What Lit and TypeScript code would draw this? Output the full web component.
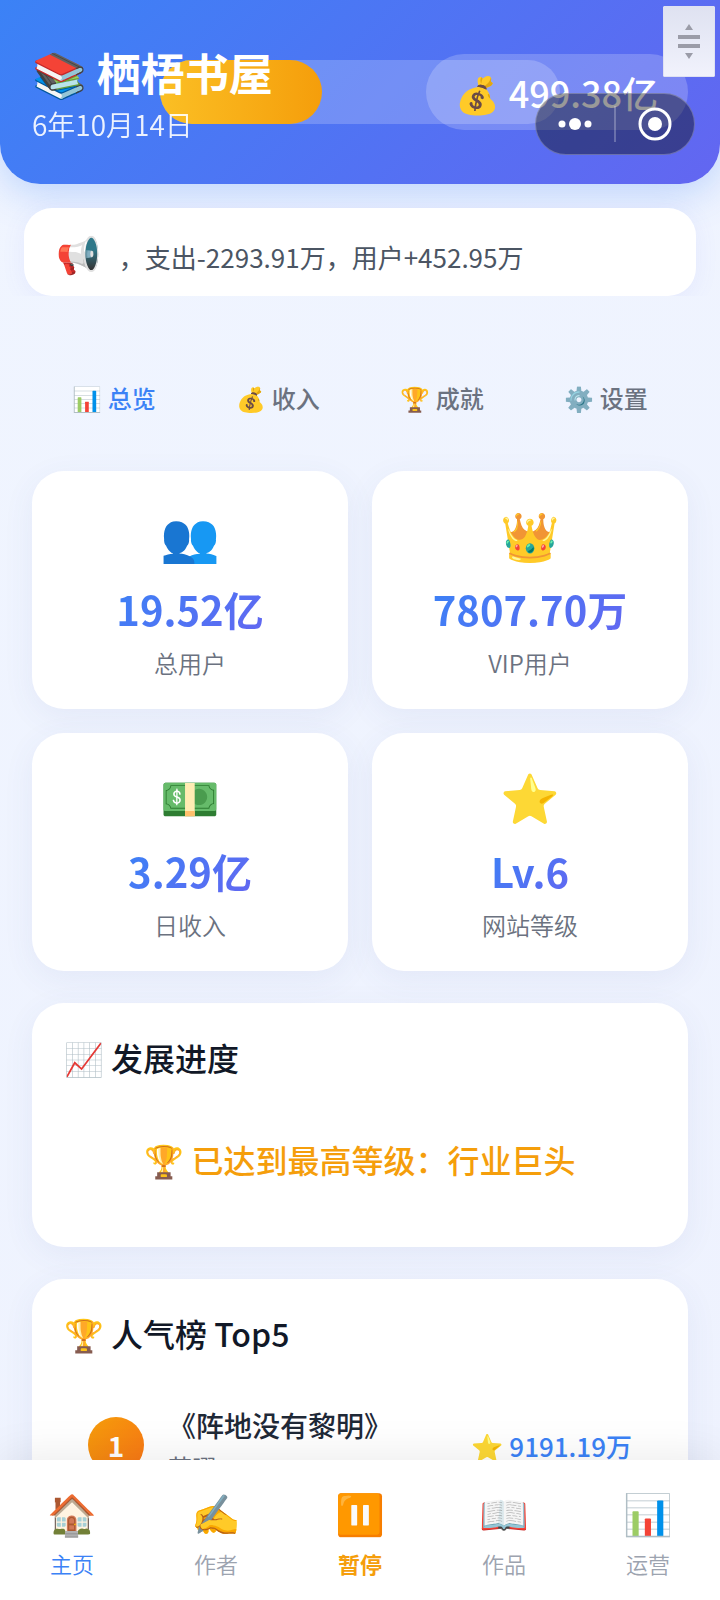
import { LitElement, html, css, svg } from "lit";
import { customElement, state } from "lit/decorators.js";
import { classMap } from "lit/directives/class-map.js";

interface Stat {
  icon: string;
  value: string;
  label: string;
}

const TABS = [
  { icon: "📊", label: "总览" },
  { icon: "💰", label: "收入" },
  { icon: "🏆", label: "成就" },
  { icon: "⚙️", label: "设置" },
];

const STATS: Stat[] = [
  { icon: "👥", value: "19.52亿", label: "总用户" },
  { icon: "👑", value: "7807.70万", label: "VIP用户" },
  { icon: "💵", value: "3.29亿", label: "日收入" },
  { icon: "⭐", value: "Lv.6", label: "网站等级" },
];

const BOOKS = [{ title: "《阵地没有黎明》", author: "苏曜", score: "9191.19万" }];

const NAV = [
  { icon: "🏠", label: "主页", kind: "active" },
  { icon: "✍️", label: "作者", kind: "" },
  { icon: "⏸️", label: "暂停", kind: "pause" },
  { icon: "📖", label: "作品", kind: "" },
  { icon: "📊", label: "运营", kind: "" },
];

@customElement("app-root")
export class AppRoot extends LitElement {
  @state() private tab = 0;
  @state() private progress = 40.5;

  static styles = css`
    :host {
      display: flex;
      flex-direction: column;
      height: 100vh;
      position: relative;
      overflow: hidden;
      font-family: "Noto Sans CJK SC", "Noto Color Emoji", sans-serif;
      color: #111827;
      background: linear-gradient(135deg, #f0f5ff 0%, #eef2fe 100%);
    }
    * {
      box-sizing: border-box;
    }
    h1,
    h2,
    p,
    ol {
      margin: 0;
      padding: 0;
    }
    button {
      font-family: inherit;
      border: 0;
      padding: 0;
      background: none;
      cursor: pointer;
    }
    .header {
      position: relative;
      flex: none;
      display: flex;
      justify-content: space-between;
      align-items: flex-start;
      padding: 44px 32px 40px;
      border-radius: 0 0 40px 40px;
      color: #fff;
      background: linear-gradient(135deg, #3b82f6, #6366f1);
      box-shadow: 0 8px 40px rgba(59, 130, 246, 0.3);
    }
    .brand {
      position: relative;
    }
    .name {
      font-size: 44px;
      line-height: 56px;
      font-weight: 700;
    }
    .date {
      margin-top: 4px;
      font-size: 28px;
      line-height: 40px;
      font-weight: 350;
      opacity: 0.9;
    }
    .speed {
      position: absolute;
      left: 160px;
      right: 160px;
      top: 60px;
      height: 64px;
      border-radius: 32px;
      background: rgba(255, 255, 255, 0.2);
    }
    .speed-fill {
      height: 100%;
      border-radius: 32px;
      background: linear-gradient(90deg, #fbbf24, #f59e0b);
    }
    .money {
      position: relative;
      display: flex;
      align-items: center;
      gap: 8px;
      margin-top: 10px;
      height: 76px;
      padding: 0 30px;
      border-radius: 38px;
      font-size: 36px;
      font-weight: 500;
      background: rgba(255, 255, 255, 0.2);
    }
    .capsule {
      position: absolute;
      z-index: 3;
      top: 93px;
      right: 25px;
      display: flex;
      align-items: center;
      width: 160px;
      height: 62px;
      border-radius: 31px;
      border: 1px solid rgba(255, 255, 255, 0.25);
      background: rgba(0, 0, 0, 0.4);
    }
    .capsule button {
      flex: 1;
      display: grid;
      place-items: center;
    }
    .capsule button + button {
      border-left: 2px solid rgba(255, 255, 255, 0.25);
      height: 36px;
    }
    .handle {
      position: absolute;
      z-index: 4;
      top: 6px;
      right: 5px;
      width: 52px;
      height: 71px;
      display: grid;
      place-items: center;
      border: 1px solid #dfe1f2;
      border-radius: 1px;
      background: linear-gradient(#dfe2f1, #f1f2fc);
    }
    svg {
      display: block;
    }
    .scroll {
      position: relative;
      flex: 1;
      min-height: 0;
      overflow-y: auto;
      scrollbar-width: none;
    }
    .notice-wrap {
      overflow: hidden;
      padding: 24px 24px 0;
    }
    .notice {
      display: flex;
      align-items: center;
      gap: 18px;
      height: 88px;
      padding: 0 32px;
      border-radius: 28px;
      background: #fff;
      box-shadow: 0 4px 24px rgba(99, 102, 241, 0.08);
    }
    .notice-icon {
      font-size: 36px;
    }
    .notice-text {
      padding-top: 8px;
      font-size: 26px;
      color: #4b5563;
      white-space: nowrap;
    }
    .tabs {
      display: grid;
      grid-template-columns: repeat(4, 1fr);
      margin: 62px 32px 34px;
    }
    .tab {
      height: 79px;
      font-size: 24px;
      font-weight: 500;
      color: #6b7280;
    }
    .tab.on {
      color: #3b82f6;
    }
    .stats {
      display: grid;
      grid-template-columns: 1fr 1fr;
      gap: 24px;
      padding: 0 32px;
    }
    .stat {
      display: flex;
      flex-direction: column;
      align-items: center;
      padding: 26px 24px 28px;
      border-radius: 32px;
      background: #fff;
      box-shadow: 0 8px 32px rgba(70, 80, 160, 0.07);
    }
    .stat-icon {
      font-size: 48px;
      line-height: 72px;
    }
    .stat-value {
      font-size: 40px;
      line-height: 60px;
      margin-top: 10px;
      font-weight: 700;
      color: transparent;
      background: linear-gradient(135deg, #3b82f6, #6366f1);
      background-clip: text;
      -webkit-background-clip: text;
    }
    .stat-label {
      font-size: 24px;
      line-height: 36px;
      margin-top: 6px;
      font-weight: 350;
      color: #6b7280;
    }
    .card {
      margin: 32px 32px 0;
      padding: 32px;
      border-radius: 32px;
      background: #fff;
      box-shadow: 0 8px 32px rgba(70, 80, 160, 0.07);
    }
    .card-title {
      font-size: 32px;
      line-height: 44px;
      font-weight: 500;
    }
    .top-level {
      padding: 52px 0 28px;
      font-size: 32px;
      line-height: 56px;
      font-weight: 500;
      text-align: center;
      color: #f59e0b;
    }
    .ranks {
      list-style: none;
      margin-top: 34px;
    }
    .rank {
      display: flex;
      align-items: center;
      gap: 24px;
      padding: 16px 24px;
    }
    .badge {
      flex: none;
      display: grid;
      place-items: center;
      width: 56px;
      height: 56px;
      border-radius: 50%;
      font-size: 28px;
      font-weight: 700;
      color: #fff;
      background: linear-gradient(135deg, #f59e0b, #f97316);
    }
    .book {
      flex: 1;
    }
    .book-title {
      font-size: 28px;
      line-height: 40px;
      font-weight: 500;
      color: #1f2937;
    }
    .book-author {
      margin-top: 4px;
      font-size: 24px;
      line-height: 36px;
      color: #6b7280;
    }
    .score {
      font-size: 26px;
      font-weight: 500;
      color: #3b82f6;
    }
    .nav {
      position: relative;
      flex: none;
      display: grid;
      grid-template-columns: repeat(5, 1fr);
      padding: 22px 0 20px;
      background: #fff;
      box-shadow: 0 -4px 40px rgba(0, 0, 0, 0.08);
    }
    .nav-item {
      display: flex;
      flex-direction: column;
      align-items: center;
      gap: 4px;
      font-weight: 350;
      color: #9ca3af;
    }
    .nav-icon {
      font-size: 40px;
      line-height: 60px;
    }
    .nav-label {
      font-size: 22px;
      line-height: 34px;
    }
    .nav-item.active {
      color: #3b82f6;
    }
    .nav-item.pause {
      color: #f59e0b;
      font-weight: 700;
    }
  `;

  private dots = svg`<circle cx="4" cy="8" r="3.5"/><circle cx="17" cy="8" r="6"/><circle cx="30" cy="8" r="3.5"/>`;

  render() {
    return html`
      <header class="header">
        <div class="speed">
          <div class="speed-fill" style="width:${this.progress}%"></div>
        </div>
        <div class="brand">
          <h1 class="name">📚 栖梧书屋</h1>
          <p class="date">6年10月14日</p>
        </div>
        <div class="money"><span>💰</span><span>499.38亿</span></div>
      </header>
      <div class="capsule">
        <button aria-label="更多">
          <svg width="34" height="16" viewBox="0 0 34 16" fill="#fff">${this.dots}</svg>
        </button>
        <button aria-label="关闭">
          <svg width="34" height="34" viewBox="0 0 34 34">
            <circle cx="17" cy="17" r="15" fill="none" stroke="#fff" stroke-width="3" />
            <circle cx="17" cy="17" r="7" fill="#fff" />
          </svg>
        </button>
      </div>
      <button class="handle" aria-label="拖动">
        <svg width="22" height="36" viewBox="0 0 22 36" fill="#9b9ca8">
          <path d="M7 6 11 0 15 6ZM0 11h22v4H0ZM0 20h22v4H0ZM7 29h8l-4 6Z" />
        </svg>
      </button>

      <main class="scroll">
        <div class="notice-wrap">
          <div class="notice">
            <span class="notice-icon">📢</span>
            <span class="notice-text">，支出-2293.91万，用户+452.95万</span>
          </div>
        </div>

        <div class="tabs">
          ${TABS.map(
            (t, i) => html`<button
              class=${classMap({ tab: true, on: i === this.tab })}
              @click=${() => (this.tab = i)}
            >${t.icon} ${t.label}</button>`
          )}
        </div>

        <section class="stats">
          ${STATS.map(
            (s) => html`<div class="stat">
              <span class="stat-icon">${s.icon}</span>
              <span class="stat-value">${s.value}</span>
              <span class="stat-label">${s.label}</span>
            </div>`
          )}
        </section>

        <section class="card">
          <h2 class="card-title">📈 发展进度</h2>
          <p class="top-level">🏆 已达到最高等级：行业巨头</p>
        </section>

        <section class="card">
          <h2 class="card-title">🏆 人气榜 Top5</h2>
          <ol class="ranks">
            ${BOOKS.map(
              (b, i) => html`<li class="rank">
                <span class="badge">${i + 1}</span>
                <div class="book">
                  <p class="book-title">${b.title}</p>
                  <p class="book-author">${b.author}</p>
                </div>
                <span class="score">⭐ ${b.score}</span>
              </li>`
            )}
          </ol>
        </section>
      </main>

      <nav class="nav">
        ${NAV.map(
          (n) => html`<button class="nav-item ${n.kind}">
            <span class="nav-icon">${n.icon}</span>
            <span class="nav-label">${n.label}</span>
          </button>`
        )}
      </nav>
    `;
  }
}
